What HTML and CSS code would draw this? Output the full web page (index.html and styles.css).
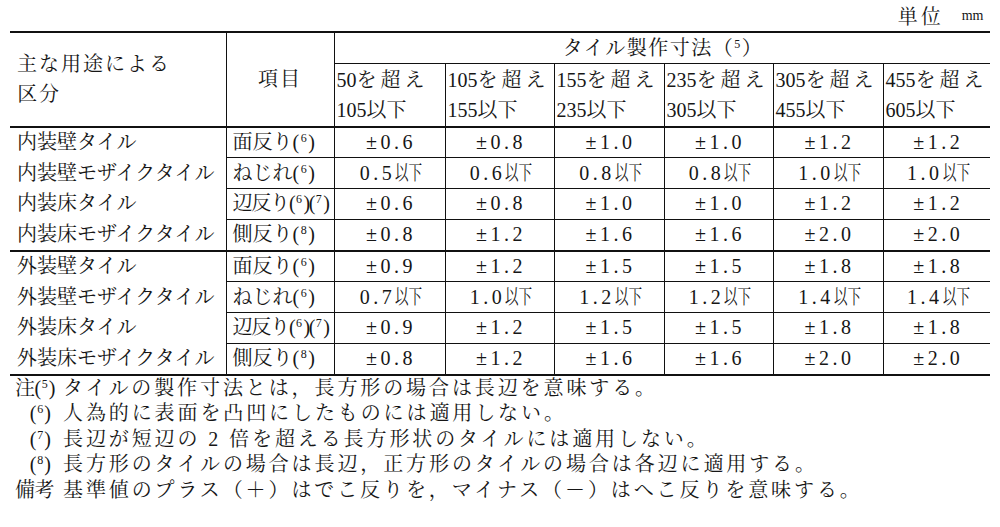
FILE: index.html
```html
<!DOCTYPE html>
<html lang="ja">
<head>
<meta charset="utf-8">
<title>タイル製作寸法</title>
<link rel="stylesheet" href="styles.css">
</head>
<body>
<div class="page">
  <div class="unit"><span class="u-jp">単位</span><span class="u-mm">mm</span></div>
  <table class="spec">
    <colgroup>
      <col class="w-cat"><col class="w-item">
      <col class="w-a"><col class="w-b"><col class="w-c"><col class="w-d"><col class="w-e"><col class="w-f">
    </colgroup>
    <thead>
      <tr class="h1">
        <th class="cat-h" rowspan="2"><span class="hl">主な用途による</span><span class="hl">区分</span></th>
        <th class="item-h" rowspan="2">項目</th>
        <th class="group-h" colspan="6">タイル製作寸法<span class="fp">（<sup>5</sup>）</span></th>
      </tr>
      <tr class="h2">
        <th class="rng"><span class="hl">50<span class="sp">を超え</span></span><span class="hl">105以下</span></th>
        <th class="rng"><span class="hl">105<span class="sp">を超え</span></span><span class="hl">155以下</span></th>
        <th class="rng"><span class="hl">155<span class="sp">を超え</span></span><span class="hl">235以下</span></th>
        <th class="rng"><span class="hl">235<span class="sp">を超え</span></span><span class="hl">305以下</span></th>
        <th class="rng"><span class="hl">305<span class="sp">を超え</span></span><span class="hl">455以下</span></th>
        <th class="rng last"><span class="hl">455<span class="sp">を超え</span></span><span class="hl">605以下</span></th>
      </tr>
    </thead>
    <tbody>
      <tr>
        <td class="cat">内装壁タイル</td><td class="item">面反り(<sup>6</sup>)</td>
        <td>±0.6</td><td>±0.8</td><td>±1.0</td><td>±1.0</td><td>±1.2</td><td class="last">±1.2</td>
      </tr>
      <tr>
        <td class="cat">内装壁モザイクタイル</td><td class="item">ねじれ(<sup>6</sup>)</td>
        <td>0.5<span class="ika">以下</span></td><td>0.6<span class="ika">以下</span></td><td>0.8<span class="ika">以下</span></td><td>0.8<span class="ika">以下</span></td><td>1.0<span class="ika">以下</span></td><td class="last">1.0<span class="ika">以下</span></td>
      </tr>
      <tr>
        <td class="cat">内装床タイル</td><td class="item narrow">辺反り(<sup>6</sup>)(<sup>7</sup>)</td>
        <td>±0.6</td><td>±0.8</td><td>±1.0</td><td>±1.0</td><td>±1.2</td><td class="last">±1.2</td>
      </tr>
      <tr class="end">
        <td class="cat">内装床モザイクタイル</td><td class="item">側反り(<sup>8</sup>)</td>
        <td>±0.8</td><td>±1.2</td><td>±1.6</td><td>±1.6</td><td>±2.0</td><td class="last">±2.0</td>
      </tr>
      <tr>
        <td class="cat">外装壁タイル</td><td class="item">面反り(<sup>6</sup>)</td>
        <td>±0.9</td><td>±1.2</td><td>±1.5</td><td>±1.5</td><td>±1.8</td><td class="last">±1.8</td>
      </tr>
      <tr>
        <td class="cat">外装壁モザイクタイル</td><td class="item">ねじれ(<sup>6</sup>)</td>
        <td>0.7<span class="ika">以下</span></td><td>1.0<span class="ika">以下</span></td><td>1.2<span class="ika">以下</span></td><td>1.2<span class="ika">以下</span></td><td>1.4<span class="ika">以下</span></td><td class="last">1.4<span class="ika">以下</span></td>
      </tr>
      <tr>
        <td class="cat">外装床タイル</td><td class="item narrow">辺反り(<sup>6</sup>)(<sup>7</sup>)</td>
        <td>±0.9</td><td>±1.2</td><td>±1.5</td><td>±1.5</td><td>±1.8</td><td class="last">±1.8</td>
      </tr>
      <tr class="end">
        <td class="cat">外装床モザイクタイル</td><td class="item">側反り(<sup>8</sup>)</td>
        <td>±0.8</td><td>±1.2</td><td>±1.6</td><td>±1.6</td><td>±2.0</td><td class="last">±2.0</td>
      </tr>
    </tbody>
  </table>
  <div class="notes">
    <div class="note"><span class="lbl lbl-first">注(<sup>5</sup>)</span><span class="txt">タイルの製作寸法とは，長方形の場合は長辺を意味する。</span></div>
    <div class="note"><span class="lbl">(<sup>6</sup>)</span><span class="txt">人為的に表面を凸凹にしたものには適用しない。</span></div>
    <div class="note"><span class="lbl">(<sup>7</sup>)</span><span class="txt">長辺が短辺の 2 倍を超える長方形状のタイルには適用しない。</span></div>
    <div class="note"><span class="lbl">(<sup>8</sup>)</span><span class="txt">長方形のタイルの場合は長辺，正方形のタイルの場合は各辺に適用する。</span></div>
    <div class="note"><span class="lbl lbl-first">備考</span><span class="txt">基準値のプラス（＋）はでこ反りを，マイナス（－）はへこ反りを意味する。</span></div>
  </div>
</div>
</body>
</html>
```
FILE: styles.css
```css
html, body {
  margin: 0;
  padding: 0;
  background: #ffffff;
}

body {
  color: #161616;
  font-family: "Liberation Serif", "Noto Serif CJK JP", "Noto Sans CJK JP", serif;
  font-size: 20px;
}

.page {
  width: 1000px;
  height: 527px;
  padding: 0 10px;
  box-sizing: border-box;
  overflow: hidden;
}

.unit {
  height: 31px;
  display: flex;
  justify-content: flex-end;
  align-items: center;
  gap: 18px;
  padding-right: 7px;
}

.u-jp {
  font-size: 20px;
  letter-spacing: 3px;
}

.u-mm {
  font-size: 14px;
  letter-spacing: -0.3px;
}

sup {
  font-size: 12px;
  line-height: 0;
  vertical-align: 7px;
  margin: 0 1.5px;
  letter-spacing: 0;
}

.spec {
  width: 980px;
  border-collapse: collapse;
  table-layout: fixed;
  border-top: 2px solid #111;
}

.w-cat { width: 216px; }
.w-item { width: 108px; }
.w-a { width: 111px; }
.w-b { width: 109px; }
.w-c { width: 110px; }
.w-d { width: 109px; }
.w-e { width: 110px; }
.w-f { width: 107px; }

.spec th {
  font-weight: normal;
  padding: 0;
  line-height: 30px;
}

.h1 { height: 31px; }
.h2 { height: 63px; }

.cat-h {
  text-align: left;
  padding-left: 7px !important;
  border-right: 1px solid #111;
  border-bottom: 2px solid #111;
  letter-spacing: 2px;
}

.hl {
  display: block;
}

.item-h {
  border-right: 1px solid #111;
  border-bottom: 2px solid #111;
  letter-spacing: 2px;
}

.group-h {
  border-bottom: 1px solid #111;
  letter-spacing: 1.5px;
}

.fp {
  letter-spacing: 0;
}

.rng {
  text-align: left;
  padding-left: 2px !important;
  border-right: 1px solid #111;
  border-bottom: 2px solid #111;
  white-space: nowrap;
}

.rng .sp {
  letter-spacing: 4px;
}

.spec .last {
  border-right: none;
}

.spec td {
  padding: 0 0 0 3px;
  height: 29.75px;
  line-height: 29px;
  text-align: center;
  white-space: nowrap;
  letter-spacing: 3.5px;
  border-right: 1px solid #111;
  border-bottom: 1px solid #111;
}

.spec td .ika {
  display: inline-block;
  letter-spacing: 0;
  width: 27px;
  transform: scaleX(0.68);
  transform-origin: left center;
  text-align: left;
}

.spec td.cat {
  text-align: left;
  padding-left: 7px;
  letter-spacing: 0;
  border-bottom: none;
}

.spec td.item {
  text-align: left;
  padding-left: 6px;
  letter-spacing: 0;
}

.spec td.narrow {
  letter-spacing: -1.2px;
}

.spec tr.end td {
  border-bottom: 2px solid #111;
}

.notes {
  display: flex;
  flex-direction: column;
  padding-left: 5px;
  line-height: 25.5px;
}

.note {
  display: flex;
  align-items: baseline;
  gap: 12px;
  white-space: nowrap;
}

.lbl {
  flex: none;
  width: 36px;
  text-align: right;
}

.lbl sup {
  margin: 0 1px;
}

.lbl-first {
  text-align: left;
  letter-spacing: -0.5px;
}

.txt {
  letter-spacing: 2.9px;
}
```
